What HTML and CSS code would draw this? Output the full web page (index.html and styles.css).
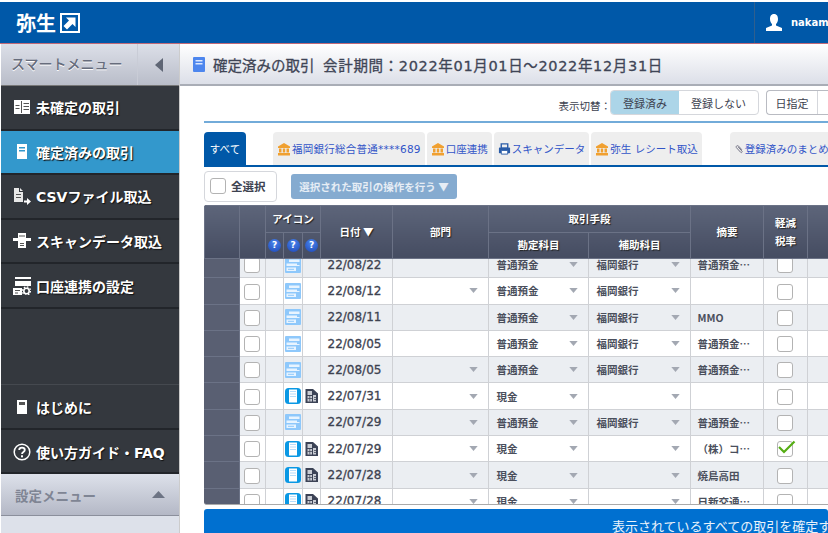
FILE: index.html
```html
<!DOCTYPE html>
<html lang="ja">
<head>
    <meta charset="UTF-8">
    <title>確定済みの取引</title>
    <link rel="stylesheet" href="styles.css">
</head>
<body>
    <svg class="defs" width="0" height="0">
        <symbol id="i-bank" viewBox="0 0 14 14"><path d="M7 1 13 4.500V6H1V4.500Z M2 6.500H4.500V10.500H2Z M5.800 6.500H8.200V10.500H5.800Z M9.500 6.500H12V10.500H9.500Z M1 11H13V13.500H1Z" fill="#f0a030"/></symbol>
        <symbol id="i-print" viewBox="0 0 14 14"><path d="M3.500 1.500H10.500V6H3.500Z" fill="none" stroke="#2a5ca8" stroke-width="1.500"/><path d="M1 5.500H13V11.500H1Z" fill="#2a5ca8"/><path d="M3.500 8.500H10.500V12.500H3.500Z" fill="#fff" stroke="#2a5ca8"/></symbol>
        <symbol id="i-clip" viewBox="0 0 12 12"><path d="M9.500 7 5.500 2.500C4 1 1.500 3 3 4.500L8 10C9 11 10.500 9.500 9.500 8.500L5 3.500" fill="none" stroke="#778" stroke-width="1.200"/></symbol>
        <symbol id="i-scan" viewBox="0 0 16 16"><rect width="16" height="16" rx="1" fill="#8ec8fb"/><path d="M4 2.500H14.500V5H4Z M1.500 6.500H12V8H14.500V9H1.500Z M1.500 10.500H11V14H1.500Z" fill="#e8f4ff"/><path d="M3 11.800H9V12.800H3Z" fill="#8ec8fb"/></symbol>
        <symbol id="i-book" viewBox="0 0 16 16"><rect width="16" height="16" rx="3.500" fill="#0a98e4"/><rect x="4" y="1.500" width="8" height="13" fill="#fff"/><path d="M5 3H11V4H5Z M5 5.500H11V6.500H5Z M5 8H11V9H5Z" fill="#b5dcfb"/></symbol>
        <symbol id="i-doc" viewBox="0 0 13 14"><path d="M.5 0H8L13 4.500V14H.5Z" fill="#3c4356"/><path d="M2.500 2H7V6H2.500Z M8 6H11V12.500H8Z M2.500 7H7V12.500H2.500Z" fill="#c9ccd3"/><path d="M2.500 9H7V9.700H2.500Z M9 8H11V8.700H9Z M9 10H11V10.700H9Z M4.500 7H5.200V12.500H4.500Z" fill="#3c4356"/></symbol>
        <symbol id="i-arrow" viewBox="0 0 10 6"><path d="M0 0H10L5 6Z" fill="#a3a8b2"/></symbol>
    </svg>

    <header class="topbar">
        <div class="logo">
            <span class="logo-text">弥生</span>
            <svg class="logo-mark" width="20" height="20" viewBox="0 0 20 20"><rect width="20" height="20" fill="#fff"/><path d="M2 2H18V18H2Z" fill="#0058a8"/><path d="M6 4.500H15.500V14L12.500 11 7 16.500 3.500 13 9 7.500Z" fill="#fff"/></svg>
        </div>
        <div class="user">
            <svg width="16" height="17" viewBox="0 0 16 17"><path d="M8 0C11 0 12 2.500 12 5 12 7.500 11 9 10 10V11.500L16 14V17H0V14L6 11.500V10C5 9 4 7.500 4 5 4 2.500 5 0 8 0Z" fill="#fff"/></svg>
            <span class="user-name">nakam</span>
        </div>
    </header>

    <div class="layout">
        <nav class="sidebar">
            <div class="side-head">
                <span class="side-head-label">スマートメニュー</span>
                <span class="side-toggle"><svg width="8" height="14" viewBox="0 0 8 14"><path d="M8 0V14L0 7Z" fill="#5f6675"/></svg></span>
            </div>
            <a class="side-item">
                <svg width="16" height="14" viewBox="0 0 16 14"><path d="M0 0H16V14H0Z" fill="#fff"/><path d="M7 1H8V13H7Z M9.500 3H15V4H9.500Z M9.500 6H15V7H9.500Z M9.500 9H15V10H9.500Z M1.500 5H5.500V6H1.500Z M1.500 8H5.500V9H1.500Z" fill="#555"/></svg>
                未確定の取引
            </a>
            <a class="side-item is-active">
                <svg width="16" height="15" viewBox="0 0 16 15"><path d="M3 0H13V15H3Z" fill="#fff"/><path d="M5 3H11V4.500H5Z M5 6H11V7.500H5Z" fill="#3398cc"/></svg>
                確定済みの取引
            </a>
            <a class="side-item">
                <svg width="18" height="17" viewBox="0 0 18 17"><path d="M1 0H6V4H10V14H1Z M7 0 10 3H7Z" fill="#e8e8e8"/><path d="M3 6H8V7H3Z M3 9H8V10H3Z" fill="#555"/><path d="M11 12.500H14V10L18 13.500 14 17V14.500H11Z" fill="#fff"/></svg>
                CSVファイル取込
            </a>
            <a class="side-item">
                <svg width="18" height="15" viewBox="0 0 18 15"><path d="M5 0H13V5H18V8H13V15H5V8H0V5H5Z" fill="#fff"/><path d="M7 10H11V11H7Z M7 12H11V13H7Z M6 2.500H12V3.500H6Z" fill="#555"/></svg>
                スキャンデータ取込
            </a>
            <a class="side-item side-item-account">
                <svg width="18" height="18" viewBox="0 0 18 18"><path d="M2 0H18V2H2Z M2 4H18V9H2Z M0 11H9V18H0Z" fill="#fff"/><path d="M2 13H7V14H2Z M2 15.500H5V16.500H2Z" fill="#555"/><circle cx="13.500" cy="14" r="2.700" fill="none" stroke="#fff" stroke-width="1.600"/><circle cx="13.500" cy="14" r="4.100" fill="none" stroke="#fff" stroke-width="1.200" stroke-dasharray="1.600 1.600"/></svg>
                口座連携の設定
            </a>
            <div class="side-fill"></div>
            <a class="side-item side-item-low">
                <svg width="16" height="14" viewBox="0 0 16 14"><path d="M3 0H13V14H3Z" fill="#fff"/><path d="M5 2H11V5H5Z" fill="#555"/></svg>
                はじめに
            </a>
            <a class="side-item side-item-low">
                <svg width="18" height="18" viewBox="0 0 18 18"><circle cx="9" cy="9" r="7.800" fill="none" stroke="#fff" stroke-width="1.500"/><path d="M6.200 7C6.200 3.800 11.800 3.800 11.800 7 11.800 9 9 9 9 11" fill="none" stroke="#fff" stroke-width="1.800"/><rect x="8" y="12.300" width="2" height="2" fill="#fff"/></svg>
                使い方ガイド・FAQ
            </a>
            <div class="side-settings">
                <span>設定メニュー</span>
                <svg width="13" height="7" viewBox="0 0 13 7"><path d="M0 7H13L6.500 0Z" fill="#6d7484"/></svg>
            </div>
            <div class="side-bottom"></div>
        </nav>

        <main class="main">
            <div class="title-bar">
                <svg width="12" height="15" viewBox="0 0 12 15"><rect width="12" height="15" rx="1" fill="#4d86ee"/><path d="M2.500 3H9.500V4.500H2.500Z M2.500 6H9.500V7.500H2.500Z" fill="#dce8ff"/></svg>
                <h1>確定済みの取引 <span class="period">会計期間：2022年01月01日～2022年12月31日</span></h1>
            </div>

            <div class="content">
                <div class="view-row">
                    <span class="view-label">表示切替：</span>
                    <div class="segment">
                        <span class="seg-item seg-on">登録済み</span>
                        <span class="seg-item">登録しない</span>
                    </div>
                    <div class="segment segment-date">
                        <span class="seg-item">日指定</span>
                        <span class="seg-item"></span>
                    </div>
                </div>

                <div class="tabs">
                    <span class="tab tab-all">すべて</span>
                    <span class="tab tab-first"><svg width="14" height="14"><use href="#i-bank"/></svg>福岡銀行総合普通****689</span>
                    <span class="tab"><svg width="14" height="14"><use href="#i-bank"/></svg>口座連携</span>
                    <span class="tab"><svg width="13" height="14"><use href="#i-print"/></svg>スキャンデータ</span>
                    <span class="tab"><svg width="14" height="14"><use href="#i-bank"/></svg>弥生 レシート取込</span>
                    <span class="tab tab-last"><svg width="10" height="12"><use href="#i-clip"/></svg>登録済みのまとめ</span>
                </div>

                <div class="action-row">
                    <label class="select-all"><span class="check"></span>全選択</label>
                    <span class="bulk-btn">選択された取引の操作を行う ▼</span>
                </div>

                <div class="grid-wrap">
                    <table class="grid grid-head">
                        <colgroup><col class="c-side"><col class="c-check"><col class="c-i1"><col class="c-i2"><col class="c-i3"><col class="c-date"><col class="c-dept"><col class="c-acc"><col class="c-sub"><col class="c-memo"><col class="c-tax"><col class="c-rest"></colgroup>
                        <tr>
                            <th rowspan="2"></th>
                            <th rowspan="2"></th>
                            <th colspan="3">アイコン</th>
                            <th rowspan="2">日付 ▼</th>
                            <th rowspan="2">部門</th>
                            <th colspan="2">取引手段</th>
                            <th rowspan="2">摘要</th>
                            <th rowspan="2">軽減<br>税率</th>
                            <th rowspan="2"></th>
                        </tr>
                        <tr>
                            <th><span class="help">?</span></th>
                            <th><span class="help">?</span></th>
                            <th><span class="help">?</span></th>
                            <th>勘定科目</th>
                            <th>補助科目</th>
                        </tr>
                    </table>
                    <div class="grid-scroll">
                        <table class="grid grid-body">
                            <colgroup><col class="c-side"><col class="c-check"><col class="c-i1"><col class="c-i2"><col class="c-i3"><col class="c-date"><col class="c-dept"><col class="c-acc"><col class="c-sub"><col class="c-memo"><col class="c-tax"><col class="c-rest"></colgroup>
                            <tr class="alt">
                                <td class="side"></td><td><span class="check"></span></td><td></td>
                                <td class="ico"><svg width="16" height="16"><use href="#i-scan"/></svg></td><td></td>
                                <td class="date">22/08/22</td><td></td>
                                <td><div class="sel">普通預金<svg width="9" height="5"><use href="#i-arrow"/></svg></div></td>
                                <td><div class="sel">福岡銀行<svg width="9" height="5"><use href="#i-arrow"/></svg></div></td>
                                <td class="memo">普通預金…</td><td><span class="check"></span></td><td></td>
                            </tr>
                            <tr>
                                <td class="side"></td><td><span class="check"></span></td><td></td>
                                <td class="ico"><svg width="16" height="16"><use href="#i-scan"/></svg></td><td></td>
                                <td class="date">22/08/12</td><td><div class="sel"><svg width="9" height="5"><use href="#i-arrow"/></svg></div></td>
                                <td><div class="sel">普通預金<svg width="9" height="5"><use href="#i-arrow"/></svg></div></td>
                                <td><div class="sel">福岡銀行<svg width="9" height="5"><use href="#i-arrow"/></svg></div></td>
                                <td class="memo"></td><td><span class="check"></span></td><td></td>
                            </tr>
                            <tr class="alt">
                                <td class="side"></td><td><span class="check"></span></td><td></td>
                                <td class="ico"><svg width="16" height="16"><use href="#i-scan"/></svg></td><td></td>
                                <td class="date">22/08/11</td><td></td>
                                <td><div class="sel">普通預金<svg width="9" height="5"><use href="#i-arrow"/></svg></div></td>
                                <td><div class="sel">福岡銀行<svg width="9" height="5"><use href="#i-arrow"/></svg></div></td>
                                <td class="memo">MMO</td><td><span class="check"></span></td><td></td>
                            </tr>
                            <tr>
                                <td class="side"></td><td><span class="check"></span></td><td></td>
                                <td class="ico"><svg width="16" height="16"><use href="#i-scan"/></svg></td><td></td>
                                <td class="date">22/08/05</td><td></td>
                                <td><div class="sel">普通預金<svg width="9" height="5"><use href="#i-arrow"/></svg></div></td>
                                <td><div class="sel">福岡銀行<svg width="9" height="5"><use href="#i-arrow"/></svg></div></td>
                                <td class="memo">普通預金…</td><td><span class="check"></span></td><td></td>
                            </tr>
                            <tr class="alt">
                                <td class="side"></td><td><span class="check"></span></td><td></td>
                                <td class="ico"><svg width="16" height="16"><use href="#i-scan"/></svg></td><td></td>
                                <td class="date">22/08/05</td><td><div class="sel"><svg width="9" height="5"><use href="#i-arrow"/></svg></div></td>
                                <td><div class="sel">普通預金<svg width="9" height="5"><use href="#i-arrow"/></svg></div></td>
                                <td><div class="sel">福岡銀行<svg width="9" height="5"><use href="#i-arrow"/></svg></div></td>
                                <td class="memo">普通預金…</td><td><span class="check"></span></td><td></td>
                            </tr>
                            <tr>
                                <td class="side"></td><td><span class="check"></span></td><td></td>
                                <td class="ico"><svg width="16" height="16"><use href="#i-book"/></svg></td><td class="ico"><svg width="13" height="14"><use href="#i-doc"/></svg></td>
                                <td class="date">22/07/31</td><td><div class="sel"><svg width="9" height="5"><use href="#i-arrow"/></svg></div></td>
                                <td><div class="sel">現金<svg width="9" height="5"><use href="#i-arrow"/></svg></div></td>
                                <td><div class="sel"><svg width="9" height="5"><use href="#i-arrow"/></svg></div></td>
                                <td class="memo"></td><td><span class="check"></span></td><td></td>
                            </tr>
                            <tr class="alt">
                                <td class="side"></td><td><span class="check"></span></td><td></td>
                                <td class="ico"><svg width="16" height="16"><use href="#i-scan"/></svg></td><td></td>
                                <td class="date">22/07/29</td><td><div class="sel"><svg width="9" height="5"><use href="#i-arrow"/></svg></div></td>
                                <td><div class="sel">普通預金<svg width="9" height="5"><use href="#i-arrow"/></svg></div></td>
                                <td><div class="sel">福岡銀行<svg width="9" height="5"><use href="#i-arrow"/></svg></div></td>
                                <td class="memo">普通預金…</td><td><span class="check"></span></td><td></td>
                            </tr>
                            <tr>
                                <td class="side"></td><td><span class="check"></span></td><td></td>
                                <td class="ico"><svg width="16" height="16"><use href="#i-book"/></svg></td><td class="ico"><svg width="13" height="14"><use href="#i-doc"/></svg></td>
                                <td class="date">22/07/29</td><td><div class="sel"><svg width="9" height="5"><use href="#i-arrow"/></svg></div></td>
                                <td><div class="sel">現金<svg width="9" height="5"><use href="#i-arrow"/></svg></div></td>
                                <td><div class="sel"><svg width="9" height="5"><use href="#i-arrow"/></svg></div></td>
                                <td class="memo">（株）コ…</td>
                                <td><span class="check check-on"><svg width="19" height="14" viewBox="0 0 19 14"><path d="M2 7 7 12 17.500 1.500" fill="none" stroke="#55ad14" stroke-width="2.200"/></svg></span></td><td></td>
                            </tr>
                            <tr class="alt">
                                <td class="side"></td><td><span class="check"></span></td><td></td>
                                <td class="ico"><svg width="16" height="16"><use href="#i-book"/></svg></td><td class="ico"><svg width="13" height="14"><use href="#i-doc"/></svg></td>
                                <td class="date">22/07/28</td><td><div class="sel"><svg width="9" height="5"><use href="#i-arrow"/></svg></div></td>
                                <td><div class="sel">現金<svg width="9" height="5"><use href="#i-arrow"/></svg></div></td>
                                <td><div class="sel"><svg width="9" height="5"><use href="#i-arrow"/></svg></div></td>
                                <td class="memo">焼鳥高田</td><td><span class="check"></span></td><td></td>
                            </tr>
                            <tr>
                                <td class="side"></td><td><span class="check"></span></td><td></td>
                                <td class="ico"><svg width="16" height="16"><use href="#i-book"/></svg></td><td class="ico"><svg width="13" height="14"><use href="#i-doc"/></svg></td>
                                <td class="date">22/07/28</td><td><div class="sel"><svg width="9" height="5"><use href="#i-arrow"/></svg></div></td>
                                <td><div class="sel">現金<svg width="9" height="5"><use href="#i-arrow"/></svg></div></td>
                                <td><div class="sel"><svg width="9" height="5"><use href="#i-arrow"/></svg></div></td>
                                <td class="memo">日新交通…</td><td><span class="check"></span></td><td></td>
                            </tr>
                        </table>
                    </div>
                </div>

                <div class="confirm-bar">表示されているすべての取引を確定する</div>
            </div>
        </main>
    </div>
</body>
</html>
```

FILE: styles.css
```css
html, body {
    margin: 0;
    height: 100%;
    overflow: hidden;
}
body {
    width: 828px;
    height: 533px;
    background: #fff;
    font-family: "DejaVu Sans", "Noto Sans CJK JP", sans-serif;
    color: #3d4250;
}
.defs {
    position: absolute;
}

/* top bar */
.topbar {
    display: flex;
    justify-content: space-between;
    height: 41px;
    margin-top: 2px;
    background: #0058a8;
    border-bottom: 1px solid #c06a78;
}
.logo {
    display: flex;
    align-items: center;
    gap: 4px;
    padding-left: 16px;
}
.logo-text {
    font-family: "Noto Sans CJK JP", sans-serif;
    font-size: 20px;
    font-weight: 700;
    color: #fff;
    line-height: 1;
}
.user {
    display: flex;
    align-items: center;
    gap: 9px;
    box-sizing: border-box;
    width: 74px;
    padding-left: 11px;
    overflow: hidden;
    border-left: 1px solid #2f5f8e;
}
.user svg {
    flex: none;
}
.user-name {
    font-size: 10px;
    font-weight: 700;
    color: #fff;
}

.layout {
    display: flex;
    height: 489px;
}

/* sidebar */
.sidebar {
    display: flex;
    flex-direction: column;
    flex: none;
    width: 178px;
    margin-left: 1px;
    font-family: "DejaVu Sans", "Noto Sans CJK JP", sans-serif;
    background: #34383e;
}
.side-head {
    display: flex;
    flex: none;
    height: 42px;
    background: linear-gradient(#dcdfe8, #b9bdc9);
    border-bottom: 1px solid #777;
    box-sizing: border-box;
}
.side-head-label {
    flex: 1;
    padding-left: 10px;
    font-size: 14px;
    font-weight: 500;
    line-height: 40px;
    color: #666c7c;
    text-shadow: 0 1px 0 #fff;
}
.side-toggle {
    display: flex;
    align-items: center;
    justify-content: center;
    width: 41px;
    border-left: 1px solid #c9ccd6;
}
.side-item {
    display: flex;
    flex: none;
    align-items: center;
    gap: 5px;
    box-sizing: border-box;
    height: 44.500px;
    padding-left: 12px;
    font-size: 14px;
    font-weight: 700;
    color: #fff;
    text-shadow: 1px 1px 1px #111;
    background: #34383e;
    border-bottom: 2px solid #22252a;
}
.side-item svg {
    flex: none;
    width: 18px;
}
.side-item-account,
.side-item-low {
    padding-top: 2px;
}
.side-item.is-active {
    background: #3398cc;
}
.side-fill {
    flex: 1;
    border-bottom: 1px solid #45494f;
}
.side-settings {
    display: flex;
    flex: none;
    align-items: center;
    justify-content: space-between;
    box-sizing: border-box;
    height: 42px;
    padding: 0 14px;
    font-size: 13.500px;
    font-weight: 700;
    color: #7f8594;
    background: linear-gradient(#dde1ea, #b4b8c6);
    border-bottom: 1px solid #8b8f9c;
}
.side-bottom {
    flex: none;
    height: 17px;
    background: #dde1ea;
}

/* main column */
.main {
    flex: 1;
    min-width: 0;
    overflow: hidden;
    border-left: 1px solid #ccc;
}
.title-bar {
    display: flex;
    align-items: center;
    gap: 8px;
    box-sizing: border-box;
    height: 42px;
    padding-left: 13px;
    background: linear-gradient(#fff, #dcdfe8);
    border-bottom: 2px solid #a9adb6;
}
.title-bar h1 {
    margin: 0;
    font-size: 14.500px;
    font-weight: 400;
    color: #3f4556;
    white-space: nowrap;
    -webkit-text-stroke: .3px #3f4556;
}
.period {
    margin-left: 4px;
    letter-spacing: .65px;
}
.content {
    padding-left: 24px;
}

/* view switch */
.view-row {
    display: flex;
    align-items: center;
    justify-content: flex-end;
    box-sizing: border-box;
    height: 37px;
    padding-top: 3px;
    font-size: 10.500px;
    border-bottom: 2px solid #72abd9;
}
.view-label {
    margin-right: -1px;
}
.segment {
    display: flex;
    flex: none;
    height: 25px;
    margin-bottom: 5px;
    background: #fff;
    border: 1px solid #d5d7dc;
    border-radius: 4px;
    box-sizing: border-box;
}
.seg-item {
    display: flex;
    align-items: center;
    padding: 0 12px;
    font-family: "Noto Sans CJK JP", sans-serif;
    font-size: 11px;
}
.seg-on {
    background: #acd5e8;
    border-radius: 3px 0 0 3px;
}
.segment-date {
    width: 62px;
    margin-left: 7px;
    border-color: #b9bbc2;
    border-right: 0;
    border-radius: 4px 0 0 4px;
}
.segment-date .seg-item {
    flex: none;
    width: 51px;
    box-sizing: border-box;
    justify-content: center;
    padding: 0;
    border-right: 1px solid #d5d7dc;
}

/* tabs */
.tabs {
    display: flex;
    align-items: flex-end;
    gap: 2px;
    box-sizing: border-box;
    height: 35px;
    margin-top: 9px;
    overflow: hidden;
    border-bottom: 2px solid #0058a8;
}
.tab {
    display: flex;
    flex: none;
    align-items: center;
    height: 33px;
    padding: 0 4px;
    font-size: 10.500px;
    color: #3255c8;
    white-space: nowrap;
    background: #eeeeee;
    border-radius: 4px 4px 0 0;
    box-sizing: border-box;
}
.tab svg {
    flex: none;
    margin-right: 1px;
}
.tab-all {
    width: 42px;
    justify-content: center;
    padding: 0;
    color: #fff;
    background: #0058a8;
}
.tab-first {
    margin-left: 25px;
    letter-spacing: .25px;
}
.tab-last {
    margin-left: 26px;
}

/* action row */
.action-row {
    display: flex;
    align-items: center;
    height: 38px;
    font-family: "Noto Sans CJK JP", sans-serif;
}
.select-all {
    display: flex;
    align-items: center;
    gap: 5px;
    box-sizing: border-box;
    width: 73px;
    height: 31px;
    padding-left: 5px;
    font-size: 11.500px;
    font-weight: 700;
    border: 1px solid #d5d7dc;
    border-radius: 4px;
}
.bulk-btn {
    display: flex;
    align-items: center;
    justify-content: center;
    box-sizing: border-box;
    width: 166px;
    height: 25px;
    margin-left: 14px;
    font-size: 10.500px;
    font-weight: 700;
    color: #e6edf5;
    background: #85abd0;
    border-radius: 3px;
}
.check {
    display: inline-block;
    position: relative;
    flex: none;
    box-sizing: border-box;
    width: 16px;
    height: 16px;
    vertical-align: middle;
    background: #fff;
    border: 1.500px solid #b3b3b3;
    border-radius: 3px;
}
.check-on svg {
    position: absolute;
    top: -2px;
    left: -1px;
}

/* grid */
.grid-wrap {
    width: 662px;
    height: 299px;
    overflow: hidden;
    background: #595f72;
    border-bottom: 1px solid #aaa;
    border-radius: 3px 0 0 3px;
}
.grid {
    width: 662px;
    table-layout: fixed;
    border-collapse: collapse;
}
.c-side { width: 35px; }
.c-check { width: 26px; }
.c-i1 { width: 18px; }
.c-i2 { width: 19px; }
.c-i3 { width: 18px; }
.c-date { width: 72px; }
.c-dept { width: 96px; }
.c-acc { width: 100px; }
.c-sub { width: 102px; }
.c-memo { width: 73px; }
.c-tax { width: 44px; }
.c-rest { width: 59px; }
.grid-head {
    height: 54px;
    background: linear-gradient(#5d657a, #454c61);
}
.grid-head th {
    padding: 0;
    font-family: "Noto Sans CJK JP", sans-serif;
    font-size: 10.500px;
    font-weight: 700;
    line-height: 18px;
    color: #fff;
    text-shadow: 1px 1px 1px #222;
    border: 1px solid #6b7286;
}
.help {
    display: block;
    width: 13px;
    height: 13px;
    margin: 0 auto;
    font-family: "DejaVu Sans", sans-serif;
    font-size: 9px;
    line-height: 13px;
    text-shadow: none;
    background: radial-gradient(circle at 50% 30%, #4a86ee, #1d46b4);
    border-radius: 50%;
}
.grid-scroll {
    height: 245px;
    overflow: hidden;
}
.grid-body {
    margin-top: -8px;
    background: #fff;
}
.grid-body tr {
    height: 26.300px;
}
.grid-body tr.alt {
    background: #ebeef2;
}
.grid-body td {
    padding: 0;
    font-family: "Noto Sans CJK JP", sans-serif;
    font-size: 10.500px;
    font-weight: 700;
    text-align: center;
    color: #4a4f5c;
    border: 1px solid #cfd1d5;
    overflow: hidden;
}
.grid-body td.side {
    background: #595f72;
    border-color: #6b7286;
    border-left: 0;
}
.grid-body td.date {
    padding-left: 7px;
    font-family: "DejaVu Sans", "Noto Sans CJK JP", sans-serif;
    font-size: 12px;
    font-weight: 400;
    text-align: left;
    color: #3d4250;
    -webkit-text-stroke: .3px #3d4250;
}
.grid-body td.memo {
    padding-left: 7px;
    text-align: left;
    white-space: nowrap;
}
.grid-body td.ico svg {
    display: block;
    margin: 0 auto;
}
.sel {
    display: flex;
    align-items: center;
    justify-content: flex-end;
    padding: 0 10px 0 8px;
}
.sel svg {
    flex: none;
    margin-left: auto;
}

/* confirm */
.confirm-bar {
    box-sizing: border-box;
    height: 40px;
    margin-top: 4px;
    padding: 7px 0 0 408px;
    font-family: "Noto Sans CJK JP", sans-serif;
    font-size: 13px;
    color: #e8f2fb;
    white-space: nowrap;
    background: #0070d0;
    border-radius: 3px;
}
```
